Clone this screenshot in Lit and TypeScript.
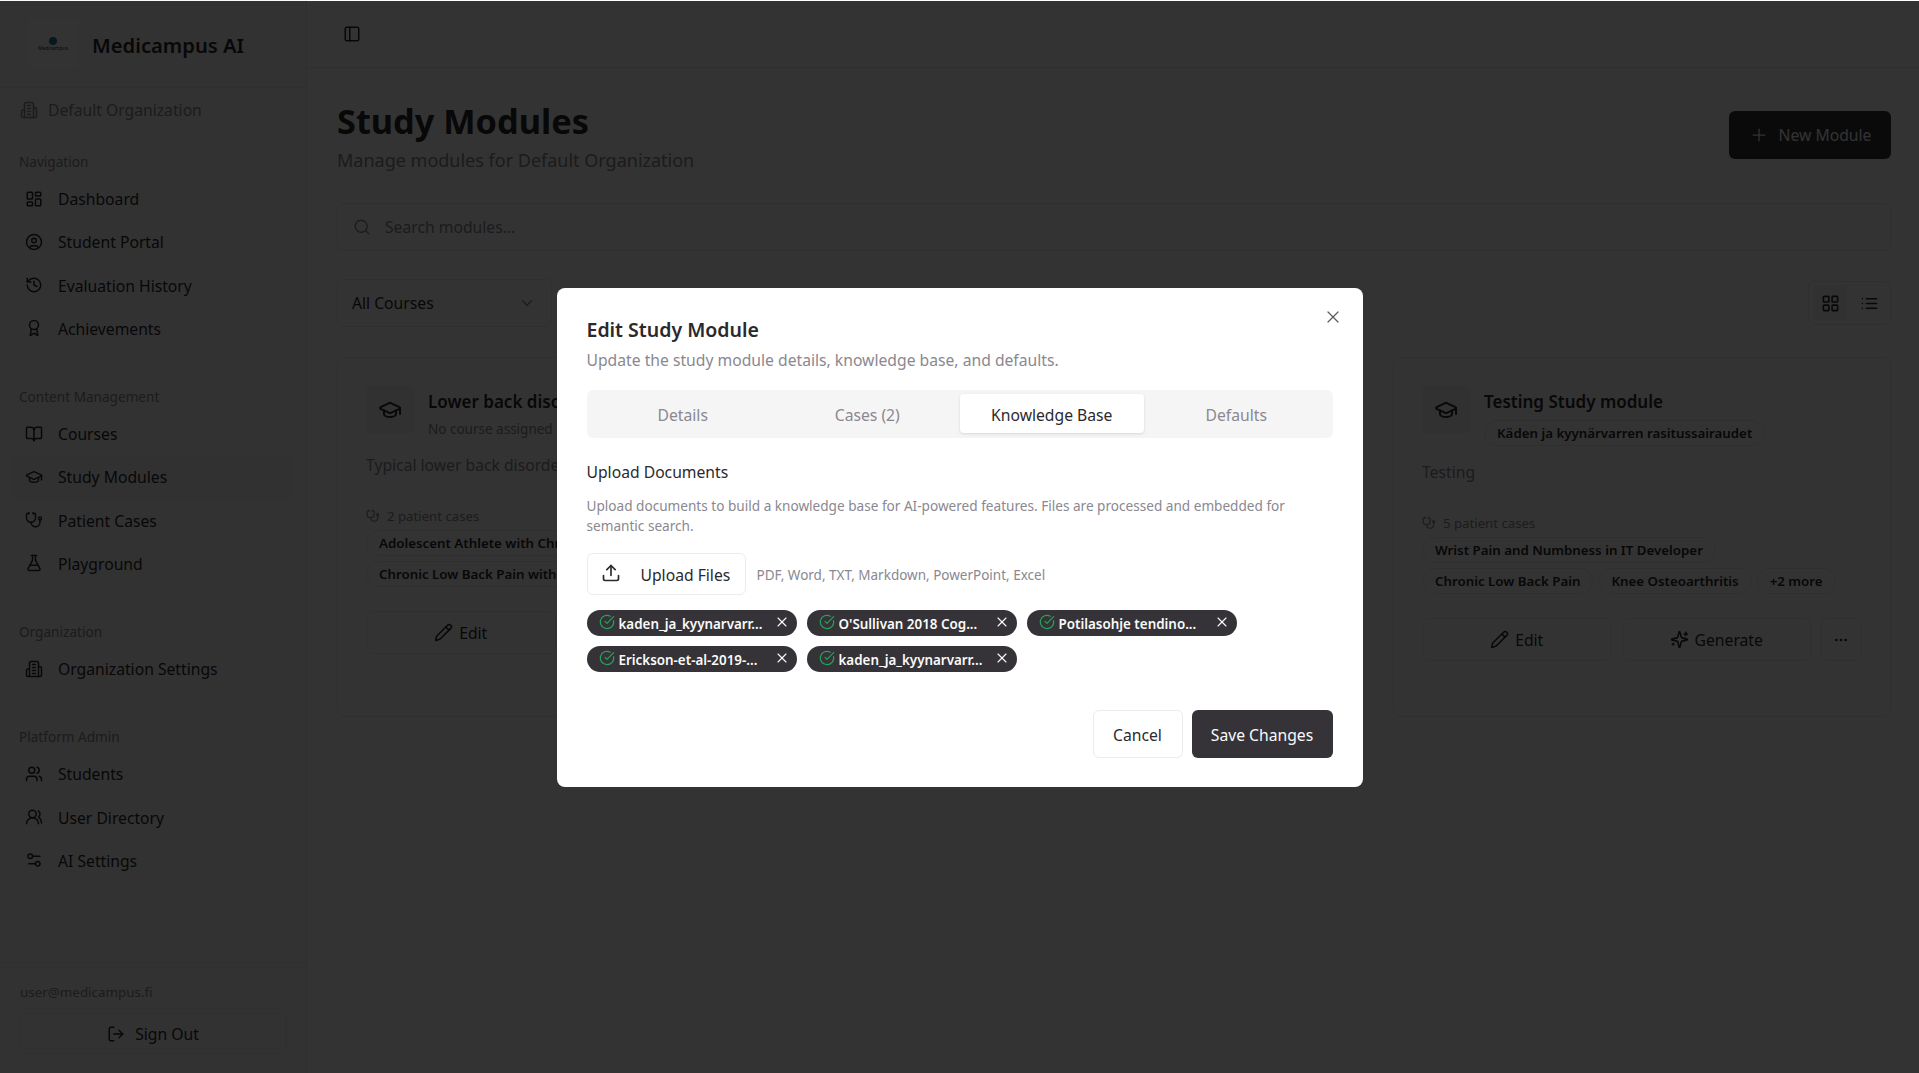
import { LitElement, css, html, svg } from 'lit';
import { customElement } from 'lit/decorators.js';

// lucide-style icon bodies
const ICONS = {
  dashboard: svg`<rect width="7" height="9" x="3" y="3" rx="1"/><rect width="7" height="5" x="14" y="3" rx="1"/><rect width="7" height="9" x="14" y="12" rx="1"/><rect width="7" height="5" x="3" y="16" rx="1"/>`,
  user: svg`<circle cx="12" cy="12" r="10"/><circle cx="12" cy="10" r="3"/><path d="M7 20.662V19a2 2 0 0 1 2-2h6a2 2 0 0 1 2 2v1.662"/>`,
  history: svg`<path d="M3 12a9 9 0 1 0 9-9 9.75 9.75 0 0 0-6.74 2.74L3 8"/><path d="M3 3v5h5"/><path d="M12 7v5l4 2"/>`,
  award: svg`<path d="m15.477 12.89 1.515 8.526a.5.5 0 0 1-.81.47l-3.58-2.687a1 1 0 0 0-1.197 0l-3.586 2.686a.5.5 0 0 1-.81-.469l1.514-8.526"/><circle cx="12" cy="8" r="6"/>`,
  book: svg`<path d="M12 7v14"/><path d="M3 18a1 1 0 0 1-1-1V4a1 1 0 0 1 1-1h5a4 4 0 0 1 4 4 4 4 0 0 1 4-4h5a1 1 0 0 1 1 1v13a1 1 0 0 1-1 1h-6a3 3 0 0 0-3 3 3 3 0 0 0-3-3z"/>`,
  cap: svg`<path d="M21.42 10.922a1 1 0 0 0-.019-1.838L12.83 5.18a2 2 0 0 0-1.66 0L2.6 9.08a1 1 0 0 0 0 1.832l8.57 3.908a2 2 0 0 0 1.66 0z"/><path d="M22 10v6"/><path d="M6 12.5V16a6 3 0 0 0 12 0v-3.5"/>`,
  stethoscope: svg`<path d="M11 2v2"/><path d="M5 2v2"/><path d="M5 3H4a2 2 0 0 0-2 2v4a6 6 0 0 0 12 0V5a2 2 0 0 0-2-2h-1"/><path d="M8 15a6 6 0 0 0 12 0v-3"/><circle cx="20" cy="10" r="2"/>`,
  flask: svg`<path d="M14 2v6a2 2 0 0 0 .245.96l5.51 10.08A2 2 0 0 1 18 22H6a2 2 0 0 1-1.755-2.96l5.51-10.08A2 2 0 0 0 10 8V2"/><path d="M6.453 15h11.094"/><path d="M8.5 2h7"/>`,
  building: svg`<path d="M6 22V4a2 2 0 0 1 2-2h8a2 2 0 0 1 2 2v18Z"/><path d="M6 12H4a2 2 0 0 0-2 2v6a2 2 0 0 0 2 2h2"/><path d="M18 9h2a2 2 0 0 1 2 2v9a2 2 0 0 1-2 2h-2"/><path d="M10 6h4"/><path d="M10 10h4"/><path d="M10 14h4"/><path d="M10 18h4"/>`,
  users: svg`<path d="M16 21v-2a4 4 0 0 0-4-4H6a4 4 0 0 0-4 4v2"/><circle cx="9" cy="7" r="4"/><path d="M22 21v-2a4 4 0 0 0-3-3.87"/><path d="M16 3.13a4 4 0 0 1 0 7.75"/>`,
  usersRound: svg`<path d="M18 21a8 8 0 0 0-16 0"/><circle cx="10" cy="8" r="5"/><path d="M22 20c0-3.37-2-6.5-4-8a5 5 0 0 0-.45-8.3"/>`,
  sliders: svg`<path d="M20 7h-9"/><path d="M14 17H5"/><circle cx="17" cy="17" r="3"/><circle cx="7" cy="7" r="3"/>`,
  logout: svg`<path d="M9 21H5a2 2 0 0 1-2-2V5a2 2 0 0 1 2-2h4"/><polyline points="16 17 21 12 16 7"/><line x1="21" x2="9" y1="12" y2="12"/>`,
  panel: svg`<rect width="18" height="18" x="3" y="3" rx="2"/><path d="M9 3v18"/>`,
  search: svg`<path d="m21 21-4.34-4.34"/><circle cx="11" cy="11" r="8"/>`,
  plus: svg`<path d="M5 12h14"/><path d="M12 5v14"/>`,
  chevron: svg`<path d="m6 9 6 6 6-6"/>`,
  grid: svg`<rect width="7" height="7" x="3" y="3" rx="1"/><rect width="7" height="7" x="14" y="3" rx="1"/><rect width="7" height="7" x="14" y="14" rx="1"/><rect width="7" height="7" x="3" y="14" rx="1"/>`,
  list: svg`<path d="M3 12h.01"/><path d="M3 18h.01"/><path d="M3 6h.01"/><path d="M8 12h13"/><path d="M8 18h13"/><path d="M8 6h13"/>`,
  pencil: svg`<path d="M21.174 6.812a1 1 0 0 0-3.986-3.987L3.842 16.174a2 2 0 0 0-.5.83l-1.321 4.352a.5.5 0 0 0 .623.622l4.353-1.32a2 2 0 0 0 .83-.497z"/><path d="m15 5 4 4"/>`,
  sparkles: svg`<path d="M9.937 15.5A2 2 0 0 0 8.5 14.063l-6.135-1.582a.5.5 0 0 1 0-.962L8.5 9.936A2 2 0 0 0 9.937 8.5l1.582-6.135a.5.5 0 0 1 .963 0L14.063 8.5A2 2 0 0 0 15.5 9.937l6.135 1.581a.5.5 0 0 1 0 .964L15.5 14.063a2 2 0 0 0-1.437 1.437l-1.582 6.135a.5.5 0 0 1-.963 0z"/><path d="M20 3v4"/><path d="M22 5h-4"/><path d="M4 17v2"/><path d="M5 18H3"/>`,
  dots: svg`<circle cx="12" cy="12" r="1"/><circle cx="19" cy="12" r="1"/><circle cx="5" cy="12" r="1"/>`,
  upload: svg`<path d="M21 15v4a2 2 0 0 1-2 2H5a2 2 0 0 1-2-2v-4"/><polyline points="17 8 12 3 7 8"/><line x1="12" x2="12" y1="3" y2="15"/>`,
  check: svg`<path d="M21.801 10A10 10 0 1 1 17 3.335"/><path d="m9 11 3 3L22 4"/>`,
  x: svg`<path d="M18 6 6 18"/><path d="m6 6 12 12"/>`,
};

type IconName = keyof typeof ICONS;

const icon = (name: IconName, size = 16, stroke = 2) => html`<svg
  class="icon"
  width=${size}
  height=${size}
  viewBox="0 0 24 24"
  fill="none"
  stroke="currentColor"
  stroke-width=${stroke}
  stroke-linecap="round"
  stroke-linejoin="round"
>${ICONS[name]}</svg>`;

const NAV: { label: string; items: { label: string; icon: IconName; active?: boolean }[] }[] = [
  {
    label: 'Navigation',
    items: [
      { label: 'Dashboard', icon: 'dashboard' },
      { label: 'Student Portal', icon: 'user' },
      { label: 'Evaluation History', icon: 'history' },
      { label: 'Achievements', icon: 'award' },
    ],
  },
  {
    label: 'Content Management',
    items: [
      { label: 'Courses', icon: 'book' },
      { label: 'Study Modules', icon: 'cap', active: true },
      { label: 'Patient Cases', icon: 'stethoscope' },
      { label: 'Playground', icon: 'flask' },
    ],
  },
  {
    label: 'Organization',
    items: [{ label: 'Organization Settings', icon: 'building' }],
  },
  {
    label: 'Platform Admin',
    items: [
      { label: 'Students', icon: 'users' },
      { label: 'User Directory', icon: 'usersRound' },
      { label: 'AI Settings', icon: 'sliders' },
    ],
  },
];

const CHIPS = [
  'kaden_ja_kyynarvarr...',
  "O'Sullivan 2018 Cog...",
  'Potilasohje tendino...',
  'Erickson-et-al-2019-...',
  'kaden_ja_kyynarvarr...',
];

@customElement('app-root')
export class AppRoot extends LitElement {
  static styles = css`
    :host {
      display: block;
      position: relative;
      height: 1073px;
      overflow: hidden;
      background: #fff;
      color: #2b292e;
      font-family: 'Noto Sans', 'Liberation Sans', sans-serif;
      font-size: 15.7px;
      --border: #ececee;
      --muted: #8a8890;
    }

    * {
      box-sizing: border-box;
    }

    .icon {
      display: block;
      flex-shrink: 0;
    }

    .layout {
      display: flex;
      height: 100%;
    }

    /* sidebar */
    .sidebar {
      width: 307px;
      flex-shrink: 0;
      display: flex;
      flex-direction: column;
      background: #fafafa;
      border-right: 1px solid var(--border);
    }

    .brand {
      height: 88px;
      flex-shrink: 0;
      display: flex;
      align-items: center;
      gap: 14px;
      padding-left: 28px;
      border-bottom: 1px solid var(--border);
    }

    .logo {
      width: 50px;
      height: 49px;
      background: #fff;
      display: flex;
      flex-direction: column;
      align-items: center;
      justify-content: center;
      border-radius: 4px;
    }

    .logo-dot {
      width: 8px;
      height: 8px;
      border-radius: 50%;
      background: #1b7f9c;
    }

    .logo-name {
      font-size: 5px;
      line-height: 6px;
      color: #1b2a55;
    }

    .brand-name {
      margin-top: 3px;
      font-size: 20.2px;
      font-weight: 600;
      line-height: 28px;
    }

    .org {
      height: 57px;
      flex-shrink: 0;
      display: flex;
      align-items: center;
      gap: 10px;
      padding: 0 0 14px 20px;
      color: var(--muted);
    }

    .nav-group {
      margin-bottom: 30px;
    }

    .nav-label {
      height: 32px;
      display: flex;
      align-items: center;
      padding-left: 19px;
      font-size: 13.6px;
      color: var(--muted);
    }

    .nav-item {
      height: 43.25px;
      margin: 0 12px;
      padding-left: 13px;
      display: flex;
      align-items: center;
      gap: 15px;
      border-radius: 6px;
    }

    .nav-item span {
      padding-top: 1px;
    }

    .nav-item.active {
      background: #f4f4f5;
    }

    .side-foot {
      margin-top: auto;
      height: 111px;
      padding: 19px 20px 0;
      border-top: 1px solid var(--border);
    }

    .side-email {
      font-size: 13.4px;
      line-height: 20px;
      color: var(--muted);
    }

    .sign-out {
      width: 266px;
      height: 41px;
      margin-top: 11px;
      display: flex;
      align-items: center;
      justify-content: center;
      gap: 10px;
      border: 1px solid var(--border);
      border-radius: 6px;
    }

    /* main */
    .main {
      flex: 1;
      min-width: 0;
    }

    .topbar {
      height: 68px;
      display: flex;
      align-items: center;
      padding-left: 36px;
      border-bottom: 1px solid var(--border);
    }

    .content {
      padding: 33px 28px 0 30px;
    }

    .page-head {
      display: flex;
      justify-content: space-between;
      align-items: flex-start;
    }

    h1 {
      margin: 0;
      font-size: 34.3px;
      line-height: 40px;
      font-weight: 700;
    }

    .subtitle {
      margin-top: 5px;
      font-size: 18px;
      line-height: 28px;
      color: var(--muted);
    }

    .new-btn {
      width: 162px;
      height: 48px;
      margin-top: 10px;
      display: flex;
      align-items: center;
      justify-content: center;
      gap: 10px;
      background: #353338;
      color: #fafafa;
      border-radius: 6px;
    }

    .search {
      height: 48px;
      margin-top: 29px;
      padding-left: 15px;
      display: flex;
      align-items: center;
      gap: 14px;
      border: 1px solid var(--border);
      border-radius: 6px;
      color: var(--muted);
    }

    .toolbar {
      margin-top: 28px;
      display: flex;
      align-items: center;
      gap: 14px;
    }

    .select {
      width: 215px;
      height: 48px;
      padding: 0 15px 0 14px;
      display: flex;
      align-items: center;
      justify-content: space-between;
      border: 1px solid var(--border);
      border-radius: 6px;
    }

    .select svg {
      color: var(--muted);
    }

    .view-toggle {
      margin-left: auto;
      width: 83px;
      height: 44px;
      padding: 4px;
      display: flex;
      gap: 5px;
      border: 1px solid var(--border);
      border-radius: 6px;
    }

    .view-toggle span {
      flex: 1;
      display: flex;
      align-items: center;
      justify-content: center;
      border-radius: 4px;
    }

    .view-toggle span.on {
      background: #f4f4f5;
    }

    .cards {
      margin-top: 30px;
      display: grid;
      grid-template-columns: repeat(3, 1fr);
      gap: 30px;
    }

    .card {
      padding: 28px 29px 55px 28px;
      border: 1px solid var(--border);
      border-radius: 8px;
    }

    .card-head {
      display: flex;
      gap: 14px;
    }

    .card-icon {
      width: 48px;
      height: 48px;
      flex-shrink: 0;
      display: flex;
      align-items: center;
      justify-content: center;
      background: #f4f4f5;
      border-radius: 6px;
    }

    .card-title {
      margin-top: 2px;
      font-size: 17px;
      line-height: 28px;
      font-weight: 600;
    }

    .card-meta {
      margin-top: 3px;
      font-size: 13.5px;
      line-height: 20px;
      color: var(--muted);
    }

    .card-desc {
      margin-top: 14px;
      line-height: 24px;
      color: var(--muted);
    }

    .cases {
      margin-top: 29px;
      display: flex;
      align-items: center;
      gap: 7px;
      font-size: 13.2px;
      line-height: 20px;
      color: var(--muted);
    }

    .pills {
      margin-top: 4px;
      display: flex;
      flex-wrap: wrap;
      gap: 5px;
    }

    .pill {
      height: 26px;
      padding: 0 12px;
      display: inline-flex;
      align-items: center;
      font-size: 13.3px;
      font-weight: 600;
      border: 1px solid var(--border);
      border-radius: 13px;
      white-space: nowrap;
    }

    .badge {
      margin-top: 4px;
    }

    .actions {
      margin-top: 24px;
      display: flex;
      gap: 10px;
    }

    .action {
      flex: 1;
      height: 43px;
      display: flex;
      align-items: center;
      justify-content: center;
      gap: 6px;
      border: 1px solid var(--border);
      border-radius: 6px;
    }

    .action.more {
      flex: 0 0 40px;
    }

    /* dialog */
    .scrim {
      position: absolute;
      inset: 1px 0 0;
      padding-top: 1px;
      display: flex;
      align-items: center;
      justify-content: center;
      background: rgba(0, 0, 0, 0.8);
    }

    .modal {
      position: relative;
      width: 806px;
      height: 499px;
      padding: 28px 30px 0;
      background: #fff;
      border-radius: 8px;
    }

    .close {
      position: absolute;
      top: 19px;
      right: 20px;
      color: #5d5c60;
    }

    h2 {
      margin: 0;
      font-size: 19.5px;
      line-height: 28px;
      font-weight: 600;
    }

    .modal-desc {
      margin-top: 4px;
      line-height: 24px;
      color: var(--muted);
    }

    .tabs {
      height: 48px;
      margin-top: 18px;
      padding: 4px 4px 5px;
      display: grid;
      grid-template-columns: repeat(4, 1fr);
      background: #f5f5f5;
      border-radius: 6px;
    }

    .tab {
      padding-top: 2px;
      display: flex;
      align-items: center;
      justify-content: center;
      color: var(--muted);
      border-radius: 4px;
    }

    .tab.active {
      background: #fff;
      color: #2b292e;
      box-shadow: 0 1px 3px rgba(0, 0, 0, 0.12);
    }

    .section-title {
      margin-top: 22px;
      line-height: 24px;
    }

    .help {
      max-width: 715px;
      margin-top: 12px;
      font-size: 13.6px;
      line-height: 19.5px;
      color: var(--muted);
    }

    .upload-row {
      margin-top: 18px;
      display: flex;
      align-items: center;
      gap: 11px;
    }

    .upload-btn {
      width: 159px;
      height: 42px;
      padding: 2px 0 0 13px;
      display: flex;
      align-items: center;
      gap: 20px;
      border: 1px solid var(--border);
      border-radius: 6px;
    }

    .upload-btn .icon {
      margin-top: -4px;
    }

    .hint {
      padding-top: 2px;
      font-size: 13.5px;
      color: var(--muted);
    }

    .chips {
      margin-top: 15px;
      display: flex;
      flex-wrap: wrap;
      gap: 10px;
    }

    .chip {
      width: 210px;
      height: 26px;
      padding-left: 12px;
      display: flex;
      align-items: center;
      background: #353338;
      color: #fafafa;
      border-radius: 13px;
      font-size: 13.4px;
      font-weight: 600;
    }

    .chip .ok {
      color: #22a559;
      margin: -2px 4px 0 0;
    }

    .chip-name {
      width: 155px;
      padding-top: 2px;
      white-space: nowrap;
      overflow: hidden;
    }

    .chip-x {
      margin-top: -2px;
    }

    .footer {
      margin-top: 38px;
      display: flex;
      justify-content: flex-end;
      gap: 9px;
    }

    .btn {
      height: 48px;
      padding-top: 2px;
      display: flex;
      align-items: center;
      justify-content: center;
      border-radius: 6px;
    }

    .btn.cancel {
      width: 90px;
      border: 1px solid var(--border);
    }

    .btn.save {
      width: 141px;
      background: #353338;
      color: #fafafa;
    }
  `;

  private renderSidebar() {
    return html`
      <aside class="sidebar">
        <div class="brand">
          <div class="logo">
            <span class="logo-dot"></span>
            <span class="logo-name">Medicampus</span>
          </div>
          <span class="brand-name">Medicampus AI</span>
        </div>
        <div class="org">${icon('building', 18)}<span>Default Organization</span></div>
        ${NAV.map(
          (group) => html`
            <div class="nav-group">
              <div class="nav-label">${group.label}</div>
              ${group.items.map(
                (item) => html`
                  <div class="nav-item ${item.active ? 'active' : ''}">
                    ${icon(item.icon, 18)}<span>${item.label}</span>
                  </div>
                `
              )}
            </div>
          `
        )}
        <div class="side-foot">
          <div class="side-email">user@medicampus.fi</div>
          <div class="sign-out">${icon('logout', 18)}<span>Sign Out</span></div>
        </div>
      </aside>
    `;
  }

  private renderCard(
    title: string,
    sub: unknown,
    desc: string,
    cases: string,
    pills: string[]
  ) {
    return html`
      <div class="card">
        <div class="card-head">
          <div class="card-icon">${icon('cap', 24)}</div>
          <div>
            <div class="card-title">${title}</div>
            ${sub}
          </div>
        </div>
        <div class="card-desc">${desc}</div>
        <div class="cases">${icon('stethoscope', 14)}<span>${cases}</span></div>
        <div class="pills">${pills.map((p) => html`<span class="pill">${p}</span>`)}</div>
        <div class="actions">
          <div class="action">${icon('pencil', 19)}<span>Edit</span></div>
          <div class="action">${icon('sparkles', 19)}<span>Generate</span></div>
          <div class="action more">${icon('dots', 16)}</div>
        </div>
      </div>
    `;
  }

  private renderMain() {
    return html`
      <main class="main">
        <div class="topbar">${icon('panel', 18)}</div>
        <div class="content">
          <div class="page-head">
            <div>
              <h1>Study Modules</h1>
              <div class="subtitle">Manage modules for Default Organization</div>
            </div>
            <div class="new-btn">${icon('plus', 20, 1.5)}<span>New Module</span></div>
          </div>
          <div class="search">${icon('search', 18, 1.7)}<span>Search modules...</span></div>
          <div class="toolbar">
            <div class="select"><span>All Courses</span>${icon('chevron', 18, 1.7)}</div>
            <div class="view-toggle">
              <span class="on">${icon('grid', 19)}</span>
              <span>${icon('list', 19)}</span>
            </div>
          </div>
          <div class="cards">
            ${this.renderCard(
              'Lower back disorders',
              html`<div class="card-meta">No course assigned</div>`,
              'Typical lower back disorders',
              '2 patient cases',
              ['Adolescent Athlete with Chronic Back Pain', 'Chronic Low Back Pain with Sciatica']
            )}
            <div class="card"></div>
            ${this.renderCard(
              'Testing Study module',
              html`<div class="badge pill">Käden ja kyynärvarren rasitussairaudet</div>`,
              'Testing',
              '5 patient cases',
              ['Wrist Pain and Numbness in IT Developer', 'Chronic Low Back Pain', 'Knee Osteoarthritis', '+2 more']
            )}
          </div>
        </div>
      </main>
    `;
  }

  private renderDialog() {
    return html`
      <div class="scrim">
        <div class="modal">
          <span class="close">${icon('x', 20, 1.5)}</span>
          <h2>Edit Study Module</h2>
          <div class="modal-desc">Update the study module details, knowledge base, and defaults.</div>
          <div class="tabs">
            <div class="tab">Details</div>
            <div class="tab">Cases (2)</div>
            <div class="tab active">Knowledge Base</div>
            <div class="tab">Defaults</div>
          </div>
          <div class="section-title">Upload Documents</div>
          <div class="help">
            Upload documents to build a knowledge base for AI-powered features. Files are processed and embedded for
            semantic search.
          </div>
          <div class="upload-row">
            <div class="upload-btn">${icon('upload', 20)}<span>Upload Files</span></div>
            <span class="hint">PDF, Word, TXT, Markdown, PowerPoint, Excel</span>
          </div>
          <div class="chips">
            ${CHIPS.map(
              (name) => html`
                <div class="chip">
                  <span class="ok">${icon('check', 16, 1.8)}</span>
                  <span class="chip-name">${name}</span>
                  <span class="chip-x">${icon('x', 16, 1.6)}</span>
                </div>
              `
            )}
          </div>
          <div class="footer">
            <div class="btn cancel">Cancel</div>
            <div class="btn save">Save Changes</div>
          </div>
        </div>
      </div>
    `;
  }

  render() {
    return html`
      <div class="layout">${this.renderSidebar()}${this.renderMain()}</div>
      ${this.renderDialog()}
    `;
  }
}

declare global {
  interface HTMLElementTagNameMap {
    'app-root': AppRoot;
  }
}
